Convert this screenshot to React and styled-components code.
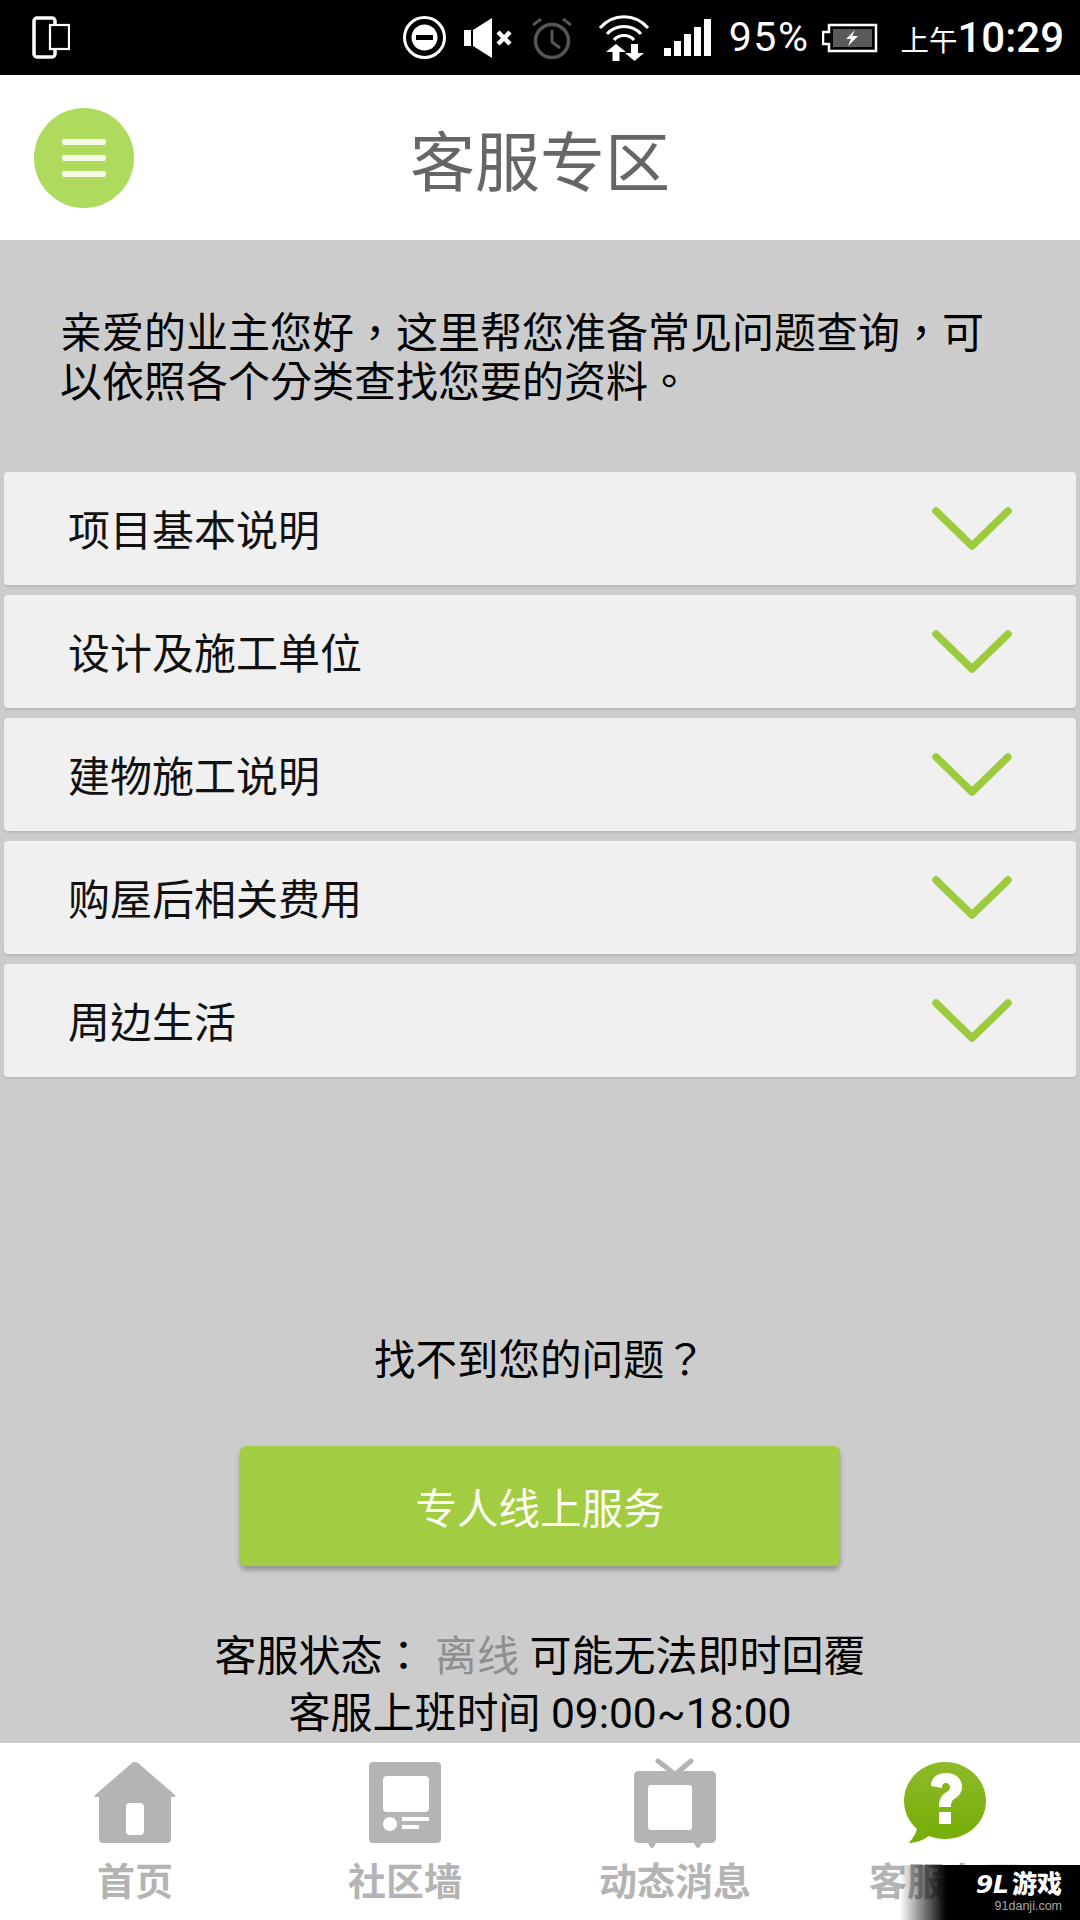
import styled, { createGlobalStyle } from "styled-components";

const GlobalStyle = createGlobalStyle`
  html, body {
    margin: 0;
    padding: 0;
    background: #cccccc;
  }
  * {
    box-sizing: border-box;
  }
`;

const questions = ["项目基本说明", "设计及施工单位", "建物施工说明", "购屋后相关费用", "周边生活"];

const Page = styled.div`
  position: relative;
  width: 1080px;
  height: 1920px;
  overflow: hidden;
  display: flex;
  flex-direction: column;
  font-family: Roboto, "Noto Sans CJK TC", "Noto Sans CJK SC", sans-serif;
`;

const StatusBar = styled.div`
  height: 75px;
  background: #000;
  color: #fff;
  display: flex;
  align-items: center;
  justify-content: space-between;
  padding: 0 16px 0 32px;
`;

const StatusGroup = styled.div`
  display: flex;
  align-items: center;
`;

const StatusIcon = styled.svg`
  display: block;
  margin-left: ${(p) => p.$ml || 0}px;
`;

const Percent = styled.span`
  margin-left: 18px;
  font-size: 41px;
  line-height: 75px;
  font-weight: 400;
  letter-spacing: 1.5px;
`;

const Meridiem = styled.span`
  margin-left: 22px;
  font-size: 28.5px;
  font-weight: 400;
  line-height: 75px;
  padding-top: 8px;
`;

const Clock = styled.span`
  font-size: 42px;
  line-height: 75px;
  font-weight: 500;
`;

const Header = styled.header`
  position: relative;
  height: 165px;
  background: #fff;
  display: flex;
  align-items: center;
  justify-content: center;
`;

const MenuButton = styled.div`
  position: absolute;
  left: 34px;
  top: 33px;
  width: 100px;
  height: 100px;
  border-radius: 50%;
  background: #aedb5d;
  display: flex;
  flex-direction: column;
  align-items: center;
  justify-content: center;
  gap: 10.5px;
`;

const MenuLine = styled.span`
  width: 44px;
  height: 5.5px;
  border-radius: 2px;
  background: #f6fbe6;
`;

const Title = styled.h1`
  margin: 0;
  font-size: 65px;
  font-weight: 400;
  color: #666;
`;

const Main = styled.main`
  height: 1503px;
  background: #cccccc;
  padding-top: 69px;
  display: flex;
  flex-direction: column;
  color: #000;
`;

const Intro = styled.p`
  margin: 0 0 65px;
  padding: 0 60px;
  font-size: 42px;
  line-height: 49px;
  font-weight: 400;
  color: #000;
`;

const RowList = styled.div`
  display: flex;
  flex-direction: column;
  gap: 10px;
  padding: 0 4px;
`;

const Row = styled.div`
  height: 113px;
  background: #f0f0f0;
  border-radius: 4px;
  box-shadow: 0 2px 2px #b9b9b9;
  display: flex;
  align-items: center;
  justify-content: space-between;
  padding: 0 64px 0 64px;
  font-size: 42px;
  font-weight: 400;
  color: #111;
`;

const RowText = styled.span`
  margin-bottom: 3px;
`;

const Ask = styled.div`
  margin-top: 259px;
  font-size: 41.5px;
  line-height: 50px;
  font-weight: 400;
  text-align: center;
`;

const ServiceButton = styled.div`
  width: 600px;
  height: 120px;
  margin: 60px auto 0;
  border-radius: 6px;
  background: #a2cd42;
  box-shadow: 0 4px 5px rgba(0, 0, 0, 0.28);
  color: #fbfdf2;
  font-size: 41.5px;
  font-weight: 400;
  display: flex;
  align-items: center;
  justify-content: center;
`;

const Info = styled.div`
  margin-top: 62px;
  font-size: 42px;
  line-height: 57px;
  font-weight: 400;
  text-align: center;
  white-space: nowrap;
`;

const Offline = styled.span`
  color: #8f8f8f;
`;

const Hours = styled.span`
  font-size: 42.5px;
`;

const TabBar = styled.nav`
  height: 177px;
  background: #fff;
  display: grid;
  grid-template-columns: repeat(4, 270px);
`;

const Tab = styled.div`
  display: flex;
  flex-direction: column;
  align-items: center;
`;

const TabIcon = styled.svg`
  display: block;
  margin-top: 15px;
`;

const TabLabel = styled.span`
  margin-top: 10px;
  font-size: 38px;
  line-height: 44px;
  font-weight: 700;
  color: #b4b4b4;
`;

const Watermark = styled.div`
  position: absolute;
  right: 0;
  bottom: 0;
  width: 180px;
  height: 55px;
  background: linear-gradient(to right, rgba(0, 0, 0, 0), #000 46px);
  color: #fff;
  display: flex;
  flex-direction: column;
  align-items: flex-end;
  padding: 6px 18px 0 0;
`;

const MarkName = styled.div`
  font-size: 25px;
  line-height: 27px;
  font-weight: 900;
  white-space: nowrap;
`;

const MarkNum = styled.span`
  font-family: "DejaVu Sans", sans-serif;
  font-style: italic;
  margin-right: 3px;
`;

const MarkSite = styled.div`
  font-family: "Liberation Sans", sans-serif;
  font-size: 12.5px;
  line-height: 16px;
  color: #aaa;
`;

function Chevron() {
  return (
    <svg width="80" height="44" viewBox="0 0 80 44">
      <path d="M4 4 L40 39 L76 4" fill="none" stroke="#9ccb3d" strokeWidth="7.5" strokeLinecap="round" strokeLinejoin="round" />
    </svg>
  );
}

function StatusIcons() {
  return (
    <StatusGroup>
      {/* 勿扰 */}
      <StatusIcon $ml={0} width="43" height="43" viewBox="0 0 43 43">
        <circle cx="21.5" cy="21.5" r="20" fill="none" stroke="#fff" strokeWidth="3" />
        <circle cx="21.5" cy="21.5" r="13" fill="#fff" />
        <rect x="13" y="19" width="17" height="5" fill="#000" />
      </StatusIcon>
      {/* 静音 */}
      <StatusIcon $ml={18} width="49" height="40" viewBox="0 0 49 40">
        <path d="M0 12 H7 V28 H0 Z M9 12 L28 0 V40 L9 28 Z" fill="#fff" />
        <path d="M34 14 L46 26 M46 14 L34 26" stroke="#fff" strokeWidth="4.5" />
      </StatusIcon>
      {/* 闹钟 */}
      <StatusIcon $ml={18} width="42" height="44" viewBox="0 0 42 44">
        <circle cx="21" cy="25" r="16.5" fill="none" stroke="#555" strokeWidth="3.5" />
        <path d="M21 14 V26 L29 32 M2 9 L10 3 M40 9 L32 3" fill="none" stroke="#555" strokeWidth="3" />
      </StatusIcon>
      {/* wifi */}
      <StatusIcon $ml={25} width="52" height="47" viewBox="0 0 52 47">
        <path d="M2 14 C15 -1 37 -1 50 14 M9 20 C18 10 34 10 43 20 M16 26 C21 20 31 20 36 26" fill="none" stroke="#fff" strokeWidth="3.2" />
        <path d="M18 30 L28 38 H21.5 V47 H14.5 V38 H8 Z M33 30 H40 V39 H46 L36.5 47 L27 39 H33 Z" fill="#fff" />
      </StatusIcon>
      {/* 信号 */}
      <StatusIcon $ml={14} width="47" height="37" viewBox="0 0 47 37">
        <path d="M0 29 H7 V37 H0 Z M10 22 H17 V37 H10 Z M20 15 H27 V37 H20 Z M30 8 H37 V37 H30 Z M40 0 H47 V37 H40 Z" fill="#fff" />
      </StatusIcon>
      <Percent>95%</Percent>
      {/* 电池 */}
      <StatusIcon $ml={13} width="56" height="30" viewBox="0 0 56 30">
        <path d="M7 2 H54 V28 H7 V21 H1 V9 H7 Z" fill="none" stroke="#fff" strokeWidth="2.5" />
        <rect x="11" y="6" width="39" height="18" fill="#5a5a5a" />
        <path d="M33 7 L24 16 H29 L26 23 L36 13 H30 Z" fill="#fff" />
      </StatusIcon>
      <Meridiem>上午</Meridiem>
      <Clock>10:29</Clock>
    </StatusGroup>
  );
}

function App() {
  return (
    <Page>
      <GlobalStyle />
      <StatusBar>
        <StatusIcon width="38" height="43" viewBox="0 0 38 43">
          <rect x="2" y="2" width="21" height="39" rx="3" fill="none" stroke="#fff" strokeWidth="3.5" />
          <rect x="18" y="9" width="19" height="24" fill="#000" stroke="#fff" strokeWidth="2.2" />
        </StatusIcon>
        <StatusIcons />
      </StatusBar>

      <Header>
        <MenuButton>
          <MenuLine />
          <MenuLine />
          <MenuLine />
        </MenuButton>
        <Title>客服专区</Title>
      </Header>

      <Main>
        <Intro>亲爱的业主您好，这里帮您准备常见问题查询，可以依照各个分类查找您要的资料。</Intro>
        <RowList>
          {questions.map((q) => (
            <Row key={q}>
              <RowText>{q}</RowText>
              <Chevron />
            </Row>
          ))}
        </RowList>
        <Ask>找不到您的问题？</Ask>
        <ServiceButton>专人线上服务</ServiceButton>
        <Info>
          客服状态： <Offline>离线</Offline> 可能无法即时回覆
          <br />
          客服上班时间 <Hours>09:00~18:00</Hours>
        </Info>
      </Main>

      <TabBar>
        <Tab>
          <TabIcon width="82" height="92" viewBox="0 0 82 92">
            <path d="M38 5 Q41 3 44 5 L81 37 Q82 39 80 39 H77 V81 Q77 85 73 85 H9 Q5 85 5 81 V39 H2 Q0 39 1 37 Z" fill="#b4b4b4" />
            <rect x="32" y="45" width="18" height="32" rx="4" fill="#fff" />
          </TabIcon>
          <TabLabel>首页</TabLabel>
        </Tab>
        <Tab>
          <TabIcon width="74" height="92" viewBox="0 0 74 92">
            <rect x="1" y="4" width="72" height="81" rx="4" fill="#b4b4b4" />
            <rect x="15" y="18" width="46" height="36" rx="4" fill="#fff" />
            <circle cx="22" cy="66" r="7" fill="#fff" />
            <rect x="34" y="59" width="27" height="4" fill="#fff" />
            <rect x="34" y="67" width="17" height="4" fill="#fff" />
          </TabIcon>
          <TabLabel>社区墙</TabLabel>
        </Tab>
        <Tab>
          <TabIcon width="82" height="92" viewBox="0 0 82 92">
            <path d="M24 3 L38 14 M57 3 L44 14" stroke="#b4b4b4" strokeWidth="5" strokeLinecap="round" fill="none" />
            <path d="M5 13 H77 Q82 13 82 18 V80 Q82 85 77 85 H68 Q66 90 64 90 Q62 90 60 85 H22 Q20 90 18 90 Q16 90 14 85 H5 Q0 85 0 80 V18 Q0 13 5 13 Z" fill="#b4b4b4" />
            <rect x="14" y="27" width="44" height="45" rx="3" fill="#fff" />
          </TabIcon>
          <TabLabel>动态消息</TabLabel>
        </Tab>
        <Tab>
          <TabIcon width="82" height="92" viewBox="0 0 82 92">
            <defs>
              <linearGradient id="bubble" x1="0" y1="0" x2="0" y2="1">
                <stop offset="0" stopColor="#8ebb2a" />
                <stop offset="1" stopColor="#75ad05" />
              </linearGradient>
            </defs>
            <path d="M41 4 C63 4 82 21 82 43 C82 65 63 81 41 81 C36 81 30 80 25 78 C18 83 10 85 5 85 C9 80 12 75 13 71 C5 64 0 54 0 43 C0 21 19 4 41 4 Z" fill="url(#bubble)" />
            <path d="M27 28 C27 19 34 15 42 15 C51 15 58 20 58 29 C58 36 53 39 49 42 C47 44 47 46 47 49 H35 C35 43 36 39 41 35 C44 33 46 32 46 29 C46 27 44 25 42 25 C39 25 38 27 38 30 Z M35 54 H47 V66 H35 Z" fill="#fff" />
          </TabIcon>
          <TabLabel>客服专区</TabLabel>
        </Tab>
      </TabBar>

      <Watermark>
        <MarkName>
          <MarkNum>9L</MarkNum>游戏
        </MarkName>
        <MarkSite>91danji.com</MarkSite>
      </Watermark>
    </Page>
  );
}

export default App;
